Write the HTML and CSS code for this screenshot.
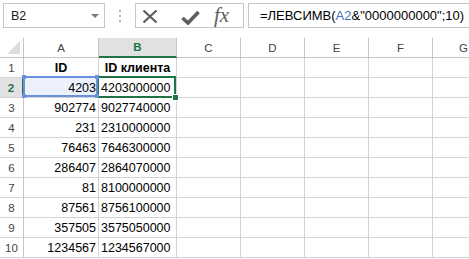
FILE: index.html
```html
<!DOCTYPE html>
<html lang="ru">
<head>
  <meta charset="UTF-8">
  <meta name="viewport" content="width=device-width, initial-scale=1.0">
  <title>ЛЕВСИМВ</title>
  <link rel="stylesheet" href="styles.css">
</head>
<body>

  <!-- строка формул -->
  <div class="bar">
    <div class="namebox">
      <span>B2</span>
      <span class="arrow"></span>
    </div>
    <div class="grip"><i></i><i></i><i></i></div>
    <div class="fxbox">
      <svg class="ico-x" width="16" height="15" viewBox="0 0 16 15">
        <path d="M1.5 1.5 L14.5 13.5 M14.5 1.5 L1.5 13.5" />
      </svg>
      <svg class="ico-ok" width="19" height="15" viewBox="0 0 19 15">
        <path d="M1.5 8 L7 13 L17.5 2" />
      </svg>
      <span class="fx">fx</span>
    </div>
    <div class="formula">=ЛЕВСИМВ(<span class="refname">A2</span>&amp;"0000000000";10)</div>
  </div>

  <!-- лист -->
  <div class="sheet">
    <div class="h corner"></div>
    <div class="h">A</div>
    <div class="h sel-col">B</div>
    <div class="h">C</div>
    <div class="h">D</div>
    <div class="h">E</div>
    <div class="h">F</div>
    <div class="h last">G</div>

    <div class="h rn">1</div>
    <div class="c title">ID</div>
    <div class="c title">ID клиента</div>
    <div class="c"></div><div class="c"></div><div class="c"></div><div class="c"></div><div class="c"></div>

    <div class="h rn sel-row">2</div>
    <div class="c num ref">4203
      <div class="refbox">
        <i class="tl"></i><i class="tr"></i><i class="bl"></i><i class="br"></i>
      </div>
    </div>
    <div class="c txt active">4203000000
      <div class="actbox"></div>
      <div class="handle"></div>
    </div>
    <div class="c"></div><div class="c"></div><div class="c"></div><div class="c"></div><div class="c"></div>

    <div class="h rn">3</div>
    <div class="c num">902774</div>
    <div class="c txt">9027740000</div>
    <div class="c"></div><div class="c"></div><div class="c"></div><div class="c"></div><div class="c"></div>

    <div class="h rn">4</div>
    <div class="c num">231</div>
    <div class="c txt">2310000000</div>
    <div class="c"></div><div class="c"></div><div class="c"></div><div class="c"></div><div class="c"></div>

    <div class="h rn">5</div>
    <div class="c num">76463</div>
    <div class="c txt">7646300000</div>
    <div class="c"></div><div class="c"></div><div class="c"></div><div class="c"></div><div class="c"></div>

    <div class="h rn">6</div>
    <div class="c num">286407</div>
    <div class="c txt">2864070000</div>
    <div class="c"></div><div class="c"></div><div class="c"></div><div class="c"></div><div class="c"></div>

    <div class="h rn">7</div>
    <div class="c num">81</div>
    <div class="c txt">8100000000</div>
    <div class="c"></div><div class="c"></div><div class="c"></div><div class="c"></div><div class="c"></div>

    <div class="h rn">8</div>
    <div class="c num">87561</div>
    <div class="c txt">8756100000</div>
    <div class="c"></div><div class="c"></div><div class="c"></div><div class="c"></div><div class="c"></div>

    <div class="h rn">9</div>
    <div class="c num">357505</div>
    <div class="c txt">3575050000</div>
    <div class="c"></div><div class="c"></div><div class="c"></div><div class="c"></div><div class="c"></div>

    <div class="h rn">10</div>
    <div class="c num">1234567</div>
    <div class="c txt">1234567000</div>
    <div class="c"></div><div class="c"></div><div class="c"></div><div class="c"></div><div class="c"></div>
  </div>

</body>
</html>
```

FILE: styles.css
```css
* {
  margin: 0;
  padding: 0;
  box-sizing: border-box;
}

body {
  width: 469px;
  height: 259px;
  overflow: hidden;
  background: #fff;
  font-family: "Liberation Sans", Arial, sans-serif;
  color: #000;
}

/* строка формул */
.bar {
  display: flex;
  align-items: flex-start;
  height: 38px;
  padding: 3px 0 0 3px;
  width: 469px;
}

.namebox {
  width: 102px;
  height: 25px;
  border: 1px solid #c6c6c6;
  display: flex;
  align-items: center;
  justify-content: space-between;
  padding: 0 5px 0 7px;
  font-size: 12.5px;
  color: #222;
}

.arrow {
  width: 0;
  height: 0;
  border-left: 4px solid transparent;
  border-right: 4px solid transparent;
  border-top: 4px solid #7a7a7a;
}

.grip {
  display: flex;
  flex-direction: column;
  gap: 3px;
  margin: 7px 14px 0 14px;
}

.grip i {
  display: block;
  width: 2px;
  height: 2px;
  background: #b4b4b4;
}

.fxbox {
  width: 109px;
  height: 25px;
  border: 1px solid #c6c6c6;
  margin-right: 4px;
  display: flex;
  align-items: center;
  padding-left: 6px;
}

.ico-x {
  stroke: #5e5e5e;
  stroke-width: 2.2;
  fill: none;
  margin-top: 1px;
}

.ico-ok {
  stroke: #5e5e5e;
  stroke-width: 3.6;
  fill: none;
  margin-left: 23px;
  margin-top: 3px;
}

.fx {
  font-family: "Liberation Serif", "Times New Roman", serif;
  font-style: italic;
  font-size: 21px;
  color: #5e5e5e;
  margin-left: 14px;
  margin-top: -1px;
}

.formula {
  flex: 1;
  min-width: 0;
  height: 25px;
  border: 1px solid #c6c6c6;
  border-right: none;
  padding-left: 11px;
  font-size: 13px;
  line-height: 23px;
  color: #000;
  white-space: nowrap;
  overflow: hidden;
}

.refname {
  color: #4472c4;
}

/* лист */
.sheet {
  display: grid;
  grid-template-columns: 24px 75px 78px 64px 64px 64px 64px 36px;
  grid-auto-rows: 20px;
  width: 469px;
}

.c {
  border-right: 1px solid #d4d4d4;
  border-bottom: 1px solid #d4d4d4;
  display: flex;
  align-items: center;
  font-size: 12.5px;
  white-space: nowrap;
  padding-top: 1px;
}

.c:nth-child(8n) {
  border-right: none;
}

.h {
  border-right: 1px solid #c6c6c6;
  border-bottom: 1px solid #c6c6c6;
  display: flex;
  align-items: center;
  justify-content: center;
  font-size: 11.5px;
  color: #444;
}

.h.last {
  border-right: none;
  justify-content: flex-start;
  padding-left: 26px;
}

.rn {
  border-bottom-color: #d4d4d4;
}

.corner {
  position: relative;
}

.corner::after {
  content: "";
  position: absolute;
  right: 3px;
  bottom: 3px;
  width: 0;
  height: 0;
  border-left: 13px solid transparent;
  border-bottom: 13px solid #dcdcdc;
}

.sel-col {
  background: #e1e1e1;
  color: #217346;
  font-weight: bold;
  border-bottom: 2px solid #217346;
}

.sel-row {
  background: #e1e1e1;
  color: #217346;
  font-weight: bold;
  border-right: 2px solid #217346;
}

.title {
  justify-content: center;
  font-weight: bold;
}

.num {
  justify-content: flex-end;
  padding-right: 2px;
}

.txt {
  padding-left: 2px;
}

/* ссылка A2 в формуле */
.ref {
  position: relative;
  background: #ecf1fb;
}

.refbox {
  position: absolute;
  left: -1px;
  top: -2px;
  right: 0;
  bottom: 0;
  border: 2px solid #6c90dc;
  z-index: 2;
}

.refbox i {
  position: absolute;
  width: 4px;
  height: 4px;
  background: #6c90dc;
}

.refbox .tl { left: -3px; top: -3px; }
.refbox .tr { right: -3px; top: -3px; }
.refbox .bl { left: -3px; bottom: -3px; }
.refbox .br { right: -3px; bottom: -3px; }

/* активная ячейка B2 */
.active {
  position: relative;
}

.actbox {
  position: absolute;
  left: -2px;
  top: -2px;
  right: 0;
  bottom: -1px;
  border: 2px solid #217346;
  z-index: 1;
}

.handle {
  position: absolute;
  left: 73px;
  top: 16px;
  width: 7px;
  height: 7px;
  background: #217346;
  border: 1px solid #fff;
  z-index: 3;
}
```
